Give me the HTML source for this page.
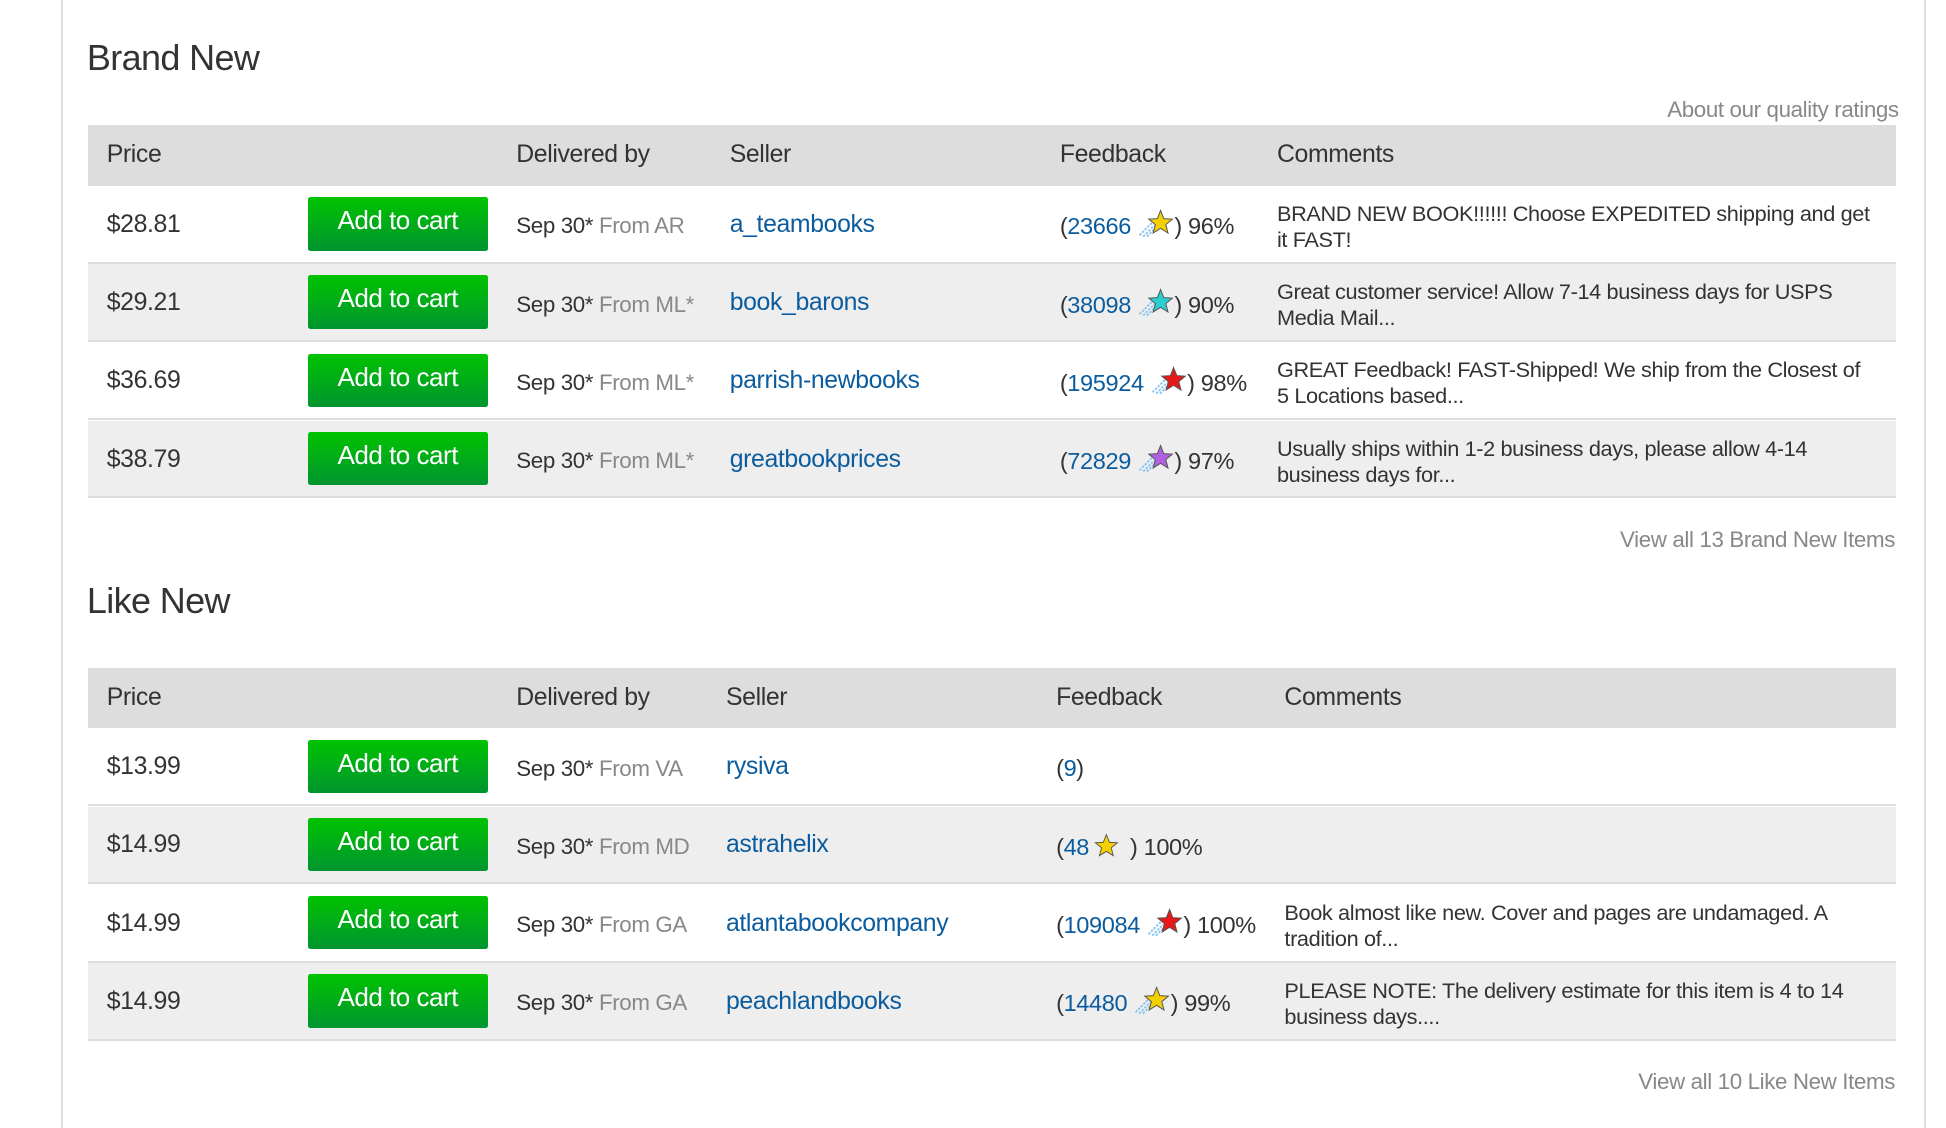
<!DOCTYPE html>
<html><head><meta charset="utf-8"><style>
html,body{margin:0;padding:0;background:#fff;width:1946px;height:1128px;overflow:hidden}
#w{zoom:1.241;position:relative;width:1568px;height:909px;font-family:"Liberation Sans",Verdana,sans-serif;color:#333}
.a{position:absolute;white-space:nowrap}
.vl{position:absolute;top:0;width:2px;height:909px;background:#ddd}
h2{position:absolute;margin:0;font-weight:normal;font-size:29px;color:#333;letter-spacing:-0.5px}
.hd{position:absolute;left:71px;width:1457px;height:49px;background:#ddd}
.row{position:absolute;left:71px;width:1457px;height:61px;border-bottom:2px solid #ddd}
.t{font-size:19px;letter-spacing:-0.3px}
.p{font-size:20px}
.btn{position:absolute;left:177px;top:9px;width:145px;height:43px;background:linear-gradient(#00c300,#009530);border-radius:2px;color:#fff;font-size:21px;text-align:center;line-height:38px;letter-spacing:-0.4px}
.lk{color:#0b5c9e}
.g{color:#888}
.cm{position:absolute;font-size:17.5px;line-height:21px;letter-spacing:-0.3px;width:480px;white-space:normal}
.star{display:inline-block;vertical-align:-3px;width:30px;height:24px}
</style></head><body><div id="w">
<div class="vl" style="left:49px"></div>
<div class="vl" style="left:1550px"></div>

<h2 style="left:70px;top:30px">Brand New</h2>
<div class="a t g" style="right:38px;top:78px;font-size:18px">About our quality ratings</div>
<div class="hd" style="top:101px"></div>
<div class="a t" style="left:86px;top:114px;font-size:20px">Price</div>
<div class="a t" style="left:416px;top:114px;font-size:20px">Delivered by</div>
<div class="a t" style="left:588px;top:114px;font-size:20px">Seller</div>
<div class="a t" style="left:854px;top:114px;font-size:20px">Feedback</div>
<div class="a t" style="left:1029px;top:114px;font-size:20px">Comments</div>

<svg width="0" height="0" style="position:absolute">
<defs>
<g id="trail"><path d="M2 22 L12 12 M5 23 L14 14 M8 23 L15 16" stroke="#8cc4f0" stroke-width="1.5" stroke-dasharray="2 1"/></g>
<path id="st" d="M19 2 L21.6 8.6 L28.5 9 L23.2 13.4 L25 20.2 L19 16.4 L13 20.2 L14.8 13.4 L9.5 9 L16.4 8.6 Z" stroke="#555" stroke-width="0.8"/>
</defs></svg>

<div class="row" style="top:150px;background:#fff"><div class="btn">Add to cart</div></div>
<div class="row" style="top:213px;background:#eee"><div class="btn">Add to cart</div></div>
<div class="row" style="top:276px;background:#fff"><div class="btn">Add to cart</div></div>
<div class="row" style="top:339px;background:#eee"><div class="btn">Add to cart</div></div>

<div class="a t p" style="left:86px;top:170px">$28.81</div>
<div class="a t" style="left:416px;top:172px;font-size:18px">Sep 30* <span class="g">From AR</span></div>
<div class="a t p lk" style="left:588px;top:170px">a_teambooks</div>
<div class="a t" style="left:854px;top:168px">(<span class="lk">23666</span> <svg class="star" viewBox="0 0 30 24"><use href="#trail"/><use href="#st" fill="#f5d000"/></svg>) 96%</div>
<div class="cm" style="left:1029px;top:162px">BRAND NEW BOOK!!!!!! Choose EXPEDITED shipping and get it FAST!</div>

<div class="a t p" style="left:86px;top:233px">$29.21</div>
<div class="a t" style="left:416px;top:235px;font-size:18px">Sep 30* <span class="g">From ML*</span></div>
<div class="a t p lk" style="left:588px;top:233px">book_barons</div>
<div class="a t" style="left:854px;top:231px">(<span class="lk">38098</span> <svg class="star" viewBox="0 0 30 24"><use href="#trail"/><use href="#st" fill="#2ccfd0"/></svg>) 90%</div>
<div class="cm" style="left:1029px;top:225px">Great customer service! Allow 7-14 business days for USPS Media Mail...</div>

<div class="a t p" style="left:86px;top:296px">$36.69</div>
<div class="a t" style="left:416px;top:298px;font-size:18px">Sep 30* <span class="g">From ML*</span></div>
<div class="a t p lk" style="left:588px;top:296px">parrish-newbooks</div>
<div class="a t" style="left:854px;top:294px">(<span class="lk">195924</span> <svg class="star" viewBox="0 0 30 24"><use href="#trail"/><use href="#st" fill="#e81818"/></svg>) 98%</div>
<div class="cm" style="left:1029px;top:288px;width:470px">GREAT Feedback! FAST-Shipped! We ship from the Closest of 5 Locations based...</div>

<div class="a t p" style="left:86px;top:359px">$38.79</div>
<div class="a t" style="left:416px;top:361px;font-size:18px">Sep 30* <span class="g">From ML*</span></div>
<div class="a t p lk" style="left:588px;top:359px">greatbookprices</div>
<div class="a t" style="left:854px;top:357px">(<span class="lk">72829</span> <svg class="star" viewBox="0 0 30 24"><use href="#trail"/><use href="#st" fill="#b060e0"/></svg>) 97%</div>
<div class="cm" style="left:1029px;top:351px">Usually ships within 1-2 business days, please allow 4-14 business days for...</div>

<div class="a t g" style="right:41px;top:425px;font-size:18px">View all 13 Brand New Items</div>

<h2 style="left:70px;top:467px">Like New</h2>
<div class="hd" style="top:538px"></div>
<div class="a t" style="left:86px;top:551px;font-size:20px">Price</div>
<div class="a t" style="left:416px;top:551px;font-size:20px">Delivered by</div>
<div class="a t" style="left:585px;top:551px;font-size:20px">Seller</div>
<div class="a t" style="left:851px;top:551px;font-size:20px">Feedback</div>
<div class="a t" style="left:1035px;top:551px;font-size:20px">Comments</div>

<div class="row" style="top:587px;background:#fff"><div class="btn">Add to cart</div></div>
<div class="row" style="top:650px;background:#eee"><div class="btn">Add to cart</div></div>
<div class="row" style="top:713px;background:#fff"><div class="btn">Add to cart</div></div>
<div class="row" style="top:776px;background:#eee"><div class="btn">Add to cart</div></div>

<div class="a t p" style="left:86px;top:607px">$13.99</div>
<div class="a t" style="left:416px;top:609px;font-size:18px">Sep 30* <span class="g">From VA</span></div>
<div class="a t p lk" style="left:585px;top:607px">rysiva</div>
<div class="a t" style="left:851px;top:608px">(<span class="lk">9</span>)</div>

<div class="a t p" style="left:86px;top:670px">$14.99</div>
<div class="a t" style="left:416px;top:672px;font-size:18px">Sep 30* <span class="g">From MD</span></div>
<div class="a t p lk" style="left:585px;top:670px">astrahelix</div>
<div class="a t" style="left:851px;top:668px">(<span class="lk">48</span><svg class="star" viewBox="6 0 30 24" style="width:28px"><use href="#st" fill="#f5d000" transform="translate(2,2)"/></svg> ) 100%</div>

<div class="a t p" style="left:86px;top:733px">$14.99</div>
<div class="a t" style="left:416px;top:735px;font-size:18px">Sep 30* <span class="g">From GA</span></div>
<div class="a t p lk" style="left:585px;top:733px">atlantabookcompany</div>
<div class="a t" style="left:851px;top:731px">(<span class="lk">109084</span> <svg class="star" viewBox="0 0 30 24"><use href="#trail"/><use href="#st" fill="#e81818"/></svg>) 100%</div>
<div class="cm" style="left:1035px;top:725px">Book almost like new. Cover and pages are undamaged. A tradition of...</div>

<div class="a t p" style="left:86px;top:796px">$14.99</div>
<div class="a t" style="left:416px;top:798px;font-size:18px">Sep 30* <span class="g">From GA</span></div>
<div class="a t p lk" style="left:585px;top:796px">peachlandbooks</div>
<div class="a t" style="left:851px;top:794px">(<span class="lk">14480</span> <svg class="star" viewBox="0 0 30 24"><use href="#trail"/><use href="#st" fill="#f5d000"/></svg>) 99%</div>
<div class="cm" style="left:1035px;top:788px">PLEASE NOTE: The delivery estimate for this item is 4 to 14 business days....</div>

<div class="a t g" style="right:41px;top:861px;font-size:18px">View all 10 Like New Items</div>
</div></body></html>
